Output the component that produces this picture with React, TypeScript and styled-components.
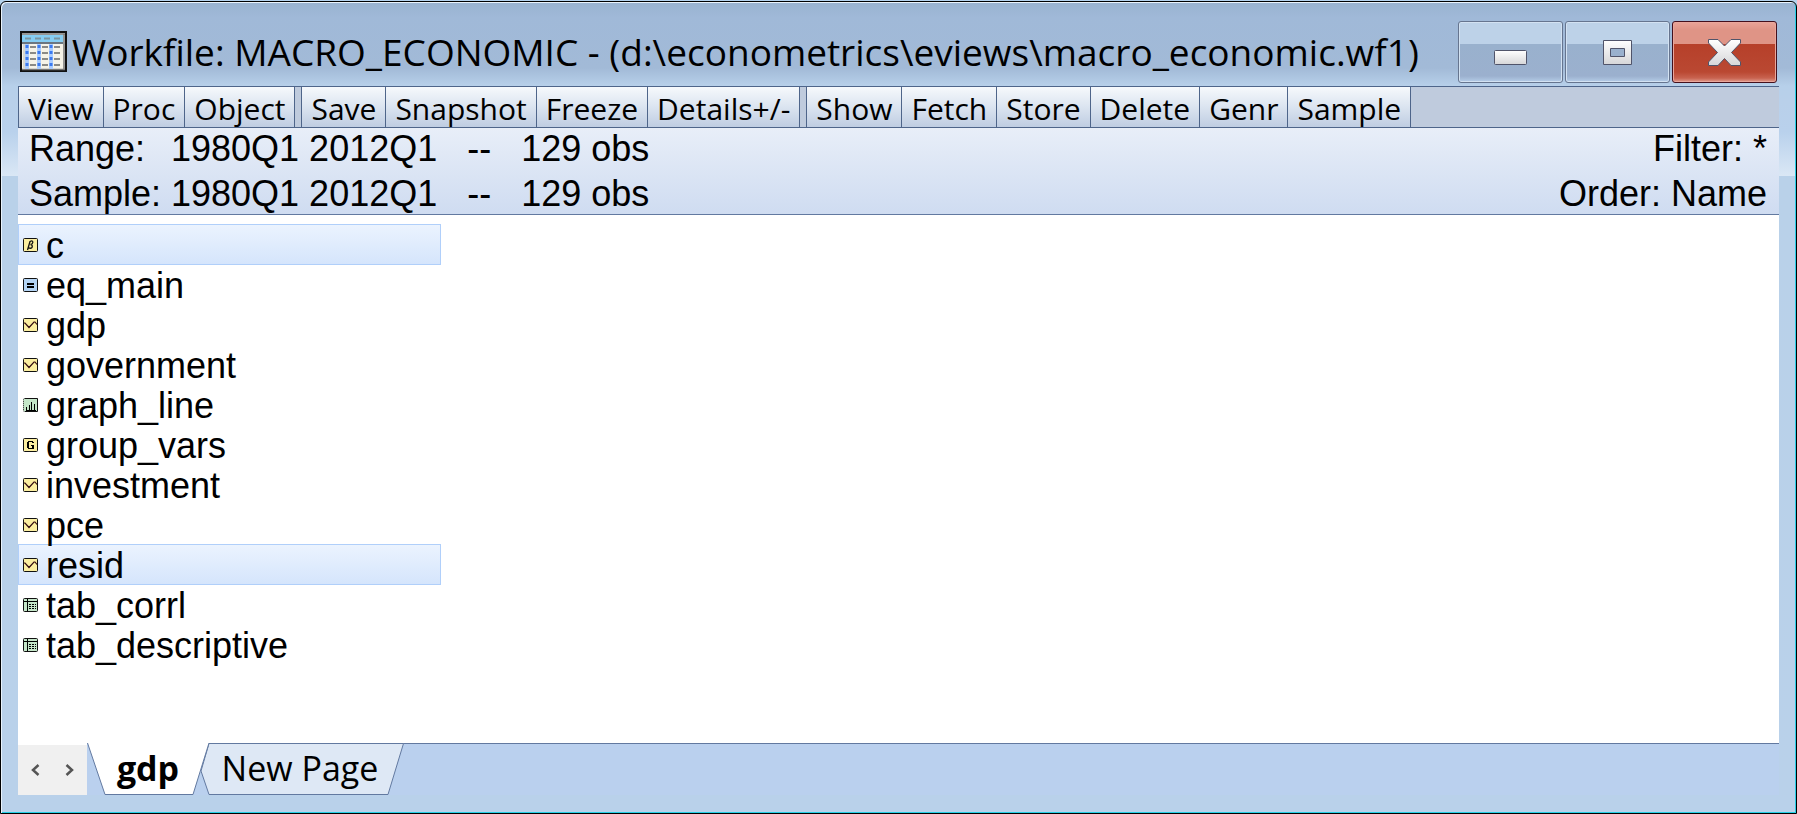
import React from "react";
import styled, { createGlobalStyle, css } from "styled-components";

const GlobalStyle = createGlobalStyle`
  *, *::before, *::after { box-sizing: border-box; }
  html, body, #root { height: 100%; }
  body { margin: 0; background: #000; color: #000; }
`;

const uiFont = `"Open Sans", "Noto Sans", sans-serif`;
const dataFont = `"Liberation Sans", Arial, sans-serif`;

const Frame = styled.div`
  min-height: 100%;
  display: flex;
  background: #b5d3ee;
  padding: 1px 0 0;
`;

const Window = styled.main`
  flex: 1;
  min-width: 0;
  display: flex;
  flex-direction: column;
  padding: 0 17px 18px;
  border: 1px solid #000;
  border-radius: 6px 6px 0 0;
  box-shadow: inset 1px 1px 0 #e9f3fc, inset -1px -1px 0 #27cfe6;
  background:
    linear-gradient(#99b3d0 0, #a0b9d8 16px, #a2bad7 66px, #b7d0ea 84px, #b9d0ea 100px, #b9d1ec 130px, #dae7f5 174px, #b9d1e9 174px, #b9d1ea 100%);
`;

const TitleBar = styled.header`
  flex: none;
  height: 84px;
  display: flex;
  align-items: center;
  gap: 5px;
  padding: 15px 2px 0;
`;

const Title = styled.h1`
  flex: 1;
  min-width: 0;
  margin: 0;
  font: 400 37px/56px ${uiFont};
  white-space: nowrap;
`;

const Controls = styled.div`
  display: flex;
  gap: 2px;
  margin-top: 4px;
  align-self: flex-start;
`;

const ControlButton = styled.button<{ $danger?: boolean }>`
  width: 105px;
  height: 62px;
  padding: 0;
  display: flex;
  align-items: center;
  justify-content: center;
  border-radius: 3px;
  ${({ $danger }) =>
    $danger
      ? css`
          border: 1px solid #43101d;
          box-shadow: inset 0 0 0 1px #e9a79c;
          background: linear-gradient(#e9a498 0, #df9486 8px, #df9486 22px, #b6402a 22px, #ba4832 50px, #c8624f 56px, #df9a8c 60px);
        `
      : css`
          border: 1px solid #66758f;
          box-shadow: inset 0 0 0 1px #d3e2f2;
          background: linear-gradient(#bdd2e8 0, #bdd2e8 22px, #99b1cd 22px, #9bb0ce 54px, #b5cde8 60px);
        `}
`;

const Client = styled.section`
  flex: 1;
  display: flex;
  flex-direction: column;
  background: #fff;
`;

const Toolbar = styled.div`
  display: flex;
  gap: 6px;
  height: 42px;
  border-top: 1px solid #4e658a;
  border-bottom: 1px solid #4e658a;
  background: #bfcbdd;
  overflow: hidden;
`;

const ToolGroup = styled.div`
  display: flex;
  border-left: 1px solid #4e658a;
`;

const ToolButton = styled.button`
  height: 40px;
  padding: 3px 9px 0;
  border: 0;
  border-right: 1px solid #4e658a;
  background: linear-gradient(#f6f9fc, #dbe4f0 50%, #bfcde2);
  color: #000;
  font: 400 30px/38px ${uiFont};
  white-space: nowrap;
`;

const Info = styled.div`
  display: flex;
  justify-content: space-between;
  height: 87px;
  padding: 0 12px 0 11px;
  border-bottom: 1px solid #6279a0;
  background: linear-gradient(#e8eef8, #cfdcf1);
  font: 400 36px/45px ${dataFont};
  white-space: pre;
`;

const Facts = styled.dl<{ $end?: boolean }>`
  margin: -2px 0 0;
  display: grid;
  grid-template-columns: ${({ $end }) => ($end ? "1fr" : "142px auto")};
  align-content: start;
  text-align: ${({ $end }) => ($end ? "right" : "left")};
  dt, dd { margin: 0; }
`;

const ObjectList = styled.ul`
  flex: 1;
  margin: 0;
  padding: 9px 0 0;
  list-style: none;
`;

const ObjectRow = styled.li<{ $selected?: boolean }>`
  display: flex;
  align-items: center;
  gap: 8px;
  width: 423px;
  height: 41px;
  margin-bottom: -1px;
  padding-left: 4px;
  border: 1px solid ${({ $selected }) => ($selected ? "#b0cffa" : "transparent")};
  background: ${({ $selected }) => ($selected ? "linear-gradient(#ebf3fe, #d5e5fc)" : "none")};
  font: 400 36px/36px ${dataFont};
`;

const ObjectName = styled.span`
  padding-top: 3px;
`;

const PageBar = styled.footer`
  display: flex;
  height: 52px;
  background: #bad0ee;
`;

const Scroller = styled.div`
  display: flex;
  width: 69px;
  background: #f0f0f0;
  border-top: 2px solid #fff;
`;

const ScrollButton = styled.button`
  flex: 1;
  padding: 0;
  border: 0;
  background: none;
  display: flex;
  align-items: center;
  justify-content: center;
`;

const TabStrip = styled.div`
  flex: 1;
  display: flex;
  background: linear-gradient(#6279a0, #6279a0) 122px 0 / 100% 1px no-repeat;
`;

const Tab = styled.button<{ $active?: boolean }>`
  position: relative;
  z-index: ${({ $active }) => ($active ? 1 : 0)};
  width: ${({ $active }) => ($active ? "122px" : "203px")};
  margin-right: -8px;
  padding: ${({ $active }) => ($active ? "0 0 3px" : "0 5px 3px 0")};
  border: 0;
  background: none;
  color: #000;
  font: ${({ $active }) => ($active ? 700 : 400)} 34px/48px ${uiFont};
  white-space: nowrap;
`;

const TabShape = styled.svg`
  position: absolute;
  inset: 0;
  z-index: -1;
`;

type Kind = "coef" | "equation" | "series" | "graph" | "group" | "table";

const kindFill: Record<Kind, string> = {
  coef: "#fbeea0",
  equation: "#b4d4f4",
  series: "#fbeea0",
  graph: "#c4e6c8",
  group: "#fbeea0",
  table: "#c4e6c8",
};

const kindMark: Record<Kind, React.ReactNode> = {
  coef: <path d="M4.5 12 7 3.5Q10 2 9.800 4.500Q9.500 6.500 7.500 6.500Q10 7 9 9.500Q7.500 11 5.500 9.500" fill="none" stroke="#111" strokeWidth="1.300" />,
  equation: <path d="M4 5h7v2H4zM4 8h7v2H4z" />,
  series: <path d="M1 5 2 5 6 9.500 11 4 12 4 14 6.500" fill="none" stroke="#310a10" strokeWidth="1.200" />,
  graph: <path d="M3 9h1v3H3zM6 7h1v5H6zM8 4h1v8H8zM11 6h1v6h-1zM3 12h10v1H3z" />,
  group: <path d="M5 3h5v1H5zM4 4h2v6H4zM9 4h2v1H9zM5 10h6v1H5zM8 7h3v3H9V8H8z" />,
  table: <path d="M1 3h13v1H1zM4 1h1v12H4zM6 6h2v1H6zM9 6h2v1H9zM12 6h1v1h-1zM6 8h2v1H6zM9 8h2v1H9zM12 8h1v1h-1zM6 10h2v1H6zM9 10h2v1H9zM12 10h1v1h-1z" />,
};

function ObjectIcon({ kind }: { kind: Kind }) {
  return (
    <svg width="15" height="14" viewBox="0 0 15 14" aria-hidden="true">
      <rect x=".5" y=".5" width="14" height="13" rx="1" fill={kindFill[kind]} stroke="#111" strokeDasharray={kind === "graph" ? "1 1" : undefined} />
      {kind === "graph" && <path d="M2 .5h12.500v13H2" fill="none" stroke="#111" />}
      {kindMark[kind]}
    </svg>
  );
}

function WorkfileIcon() {
  return (
    <svg width="47" height="41" viewBox="0 0 47 41" aria-hidden="true">
      <rect x="1" y="1" width="45" height="39" fill="#f6f3e8" stroke="#111" strokeWidth="2" />
      <path d="M2 3h43M44 3v36M2 38.500h43" stroke="#777" strokeWidth="1.500" fill="none" />
      <path d="M2 4h41v7H2z" fill="#86cdf2" />
      <path d="M2 12h41" stroke="#6b7680" strokeWidth="2" />
      <path d="M5 7.500h6M15 7.500h6M24 7.500h6M34 7.500h6" stroke="#7c95a0" strokeWidth="2" />
      {[8, 20, 32].map((x) => (
        <g key={x}>
          <path d={`M${x - 1} 13v25`} stroke="#a9ccff" strokeWidth="4" />
          <path d={`M${x - 1} 14v24`} stroke="#3b7af0" strokeWidth="3" strokeDasharray="3 3" />
          <path d={`M${x + 2} 16h6M${x + 2} 22h6M${x + 2} 28h6M${x + 2} 34h6`} stroke="#8a8a86" strokeWidth="2" />
        </g>
      ))}
      <path d="M4 13v25" stroke="#d8d8d0" strokeWidth="2" />
    </svg>
  );
}

const GlyphGradient = ({ id }: { id: string }) => (
  <defs>
    <linearGradient id={id} x1="0" y1="0" x2="0" y2="1">
      <stop offset="0" stopColor="#fff" />
      <stop offset="1" stopColor="#d6d6d8" />
    </linearGradient>
  </defs>
);

const MinimizeGlyph = () => (
  <svg width="33" height="27" viewBox="0 0 33 27" aria-hidden="true">
    <GlyphGradient id="min" />
    <rect x=".5" y="11.500" width="32" height="14" rx="1" fill="url(#min)" stroke="#50546a" />
  </svg>
);

const MaximizeGlyph = () => (
  <svg width="29" height="27" viewBox="0 0 29 27" aria-hidden="true">
    <GlyphGradient id="max" />
    <path d="M.5 1.500h28v24H.5zM7.500 9.500v8h14v-8z" fill="url(#max)" fillRule="evenodd" stroke="#50546a" />
  </svg>
);

const CloseGlyph = () => (
  <svg width="33" height="27" viewBox="0 0 33 27" aria-hidden="true">
    <GlyphGradient id="close" />
    <path d="M.5 .5H10L16.500 7 23 .5h9.500V4L23.500 13.500 32.500 23v3.500H23L16.500 19.500 10 26.500H.5V23L9.500 13.500.5 4z" fill="url(#close)" stroke="#50546a" strokeLinejoin="round" />
  </svg>
);

const toolGroups = [
  ["View", "Proc", "Object"],
  ["Save", "Snapshot", "Freeze", "Details+/-"],
  ["Show", "Fetch", "Store", "Delete", "Genr", "Sample"],
];

const objects: { name: string; kind: Kind; selected?: boolean }[] = [
  { name: "c", kind: "coef", selected: true },
  { name: "eq_main", kind: "equation" },
  { name: "gdp", kind: "series" },
  { name: "government", kind: "series" },
  { name: "graph_line", kind: "graph" },
  { name: "group_vars", kind: "group" },
  { name: "investment", kind: "series" },
  { name: "pce", kind: "series" },
  { name: "resid", kind: "series", selected: true },
  { name: "tab_corrl", kind: "table" },
  { name: "tab_descriptive", kind: "table" },
];

export default function App() {
  return (
    <Frame>
      <GlobalStyle />
      <Window>
        <TitleBar>
          <WorkfileIcon />
          <Title>Workfile: MACRO_ECONOMIC - (d:\econometrics\eviews\macro_economic.wf1)</Title>
          <Controls>
            <ControlButton aria-label="Minimize"><MinimizeGlyph /></ControlButton>
            <ControlButton aria-label="Maximize"><MaximizeGlyph /></ControlButton>
            <ControlButton aria-label="Close" $danger><CloseGlyph /></ControlButton>
          </Controls>
        </TitleBar>
        <Client>
          <Toolbar role="toolbar">
            {toolGroups.map((group) => (
              <ToolGroup key={group[0]}>
                {group.map((label) => <ToolButton key={label}>{label}</ToolButton>)}
              </ToolGroup>
            ))}
          </Toolbar>
          <Info>
            <Facts>
              <dt>Range:</dt>
              <dd>{"1980Q1 2012Q1   --   129 obs"}</dd>
              <dt>Sample:</dt>
              <dd>{"1980Q1 2012Q1   --   129 obs"}</dd>
            </Facts>
            <Facts $end>
              <dd>Filter: *</dd>
              <dd>Order: Name</dd>
            </Facts>
          </Info>
          <ObjectList>
            {objects.map(({ name, kind, selected }) => (
              <ObjectRow key={name} $selected={selected}>
                <ObjectIcon kind={kind} />
                <ObjectName>{name}</ObjectName>
              </ObjectRow>
            ))}
          </ObjectList>
          <PageBar>
            <Scroller>
              <ScrollButton aria-label="Previous page">
                <svg width="10" height="12" viewBox="0 0 10 12" aria-hidden="true"><path d="M8.500 1 3 6l5.500 5" fill="none" stroke="#555" strokeWidth="2.500" /></svg>
              </ScrollButton>
              <ScrollButton aria-label="Next page">
                <svg width="10" height="12" viewBox="0 0 10 12" aria-hidden="true"><path d="M1.500 1 7 6l-5.500 5" fill="none" stroke="#555" strokeWidth="2.500" /></svg>
              </ScrollButton>
            </Scroller>
            <TabStrip role="tablist">
              <Tab role="tab" aria-selected="true" $active>
                <TabShape width="122" height="52" viewBox="0 0 122 52" aria-hidden="true">
                  <path d="M.5 0 18 51.500H106L122 0" fill="#fff" stroke="#6279a0" />
                </TabShape>
                gdp
              </Tab>
              <Tab role="tab" aria-selected="false">
                <TabShape width="203" height="52" viewBox="0 0 203 52" aria-hidden="true">
                  <path d="M8 .5H202.500L187 51.500H8L0 28z" fill="#dee8f5" stroke="#6279a0" />
                </TabShape>
                New Page
              </Tab>
            </TabStrip>
          </PageBar>
        </Client>
      </Window>
    </Frame>
  );
}
